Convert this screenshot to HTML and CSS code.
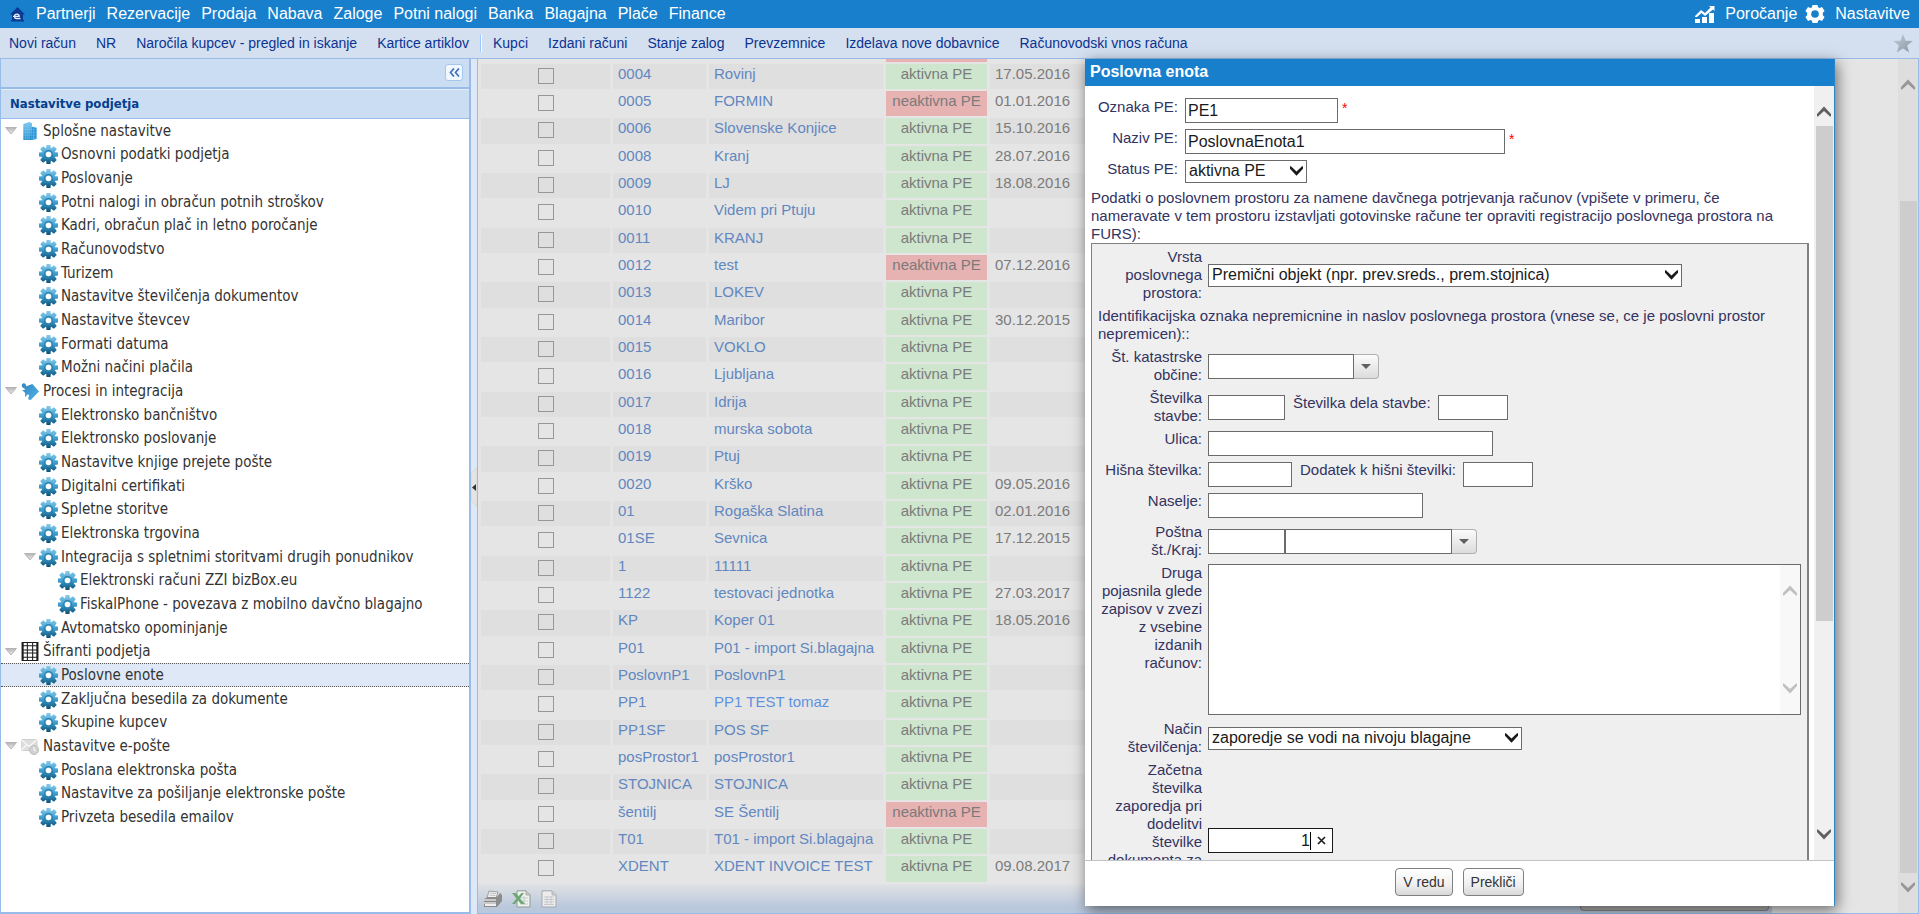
FILE: index.html
```html
<!DOCTYPE html>
<html lang="sl">
<head>
<meta charset="utf-8">
<title>Poslovne enote</title>
<link rel="stylesheet" href="styles.css">
</head>
<body>
<svg class="defs" aria-hidden="true">
  <defs>
    <linearGradient id="blue" gradientUnits="userSpaceOnUse" x1="0" y1="0" x2="0" y2="20"><stop offset="0" stop-color="#8ccbe8"/><stop offset=".5" stop-color="#3d9fd0"/><stop offset="1" stop-color="#0d4f74"/></linearGradient>
    <linearGradient id="sky" x1="0" y1="0" x2="1" y2="1"><stop offset="0" stop-color="#2f86bd"/><stop offset="1" stop-color="#55b4ee"/></linearGradient>
    <linearGradient id="tower" x1="0" y1="0" x2="0" y2="1"><stop offset="0" stop-color="#7cc8f0"/><stop offset="1" stop-color="#1d86cb"/></linearGradient>
    <linearGradient id="silver" x1="0" y1="0" x2="0" y2="1"><stop offset="0" stop-color="#b5b5b5"/><stop offset="1" stop-color="#ececec"/></linearGradient>
    <linearGradient id="starfill" x1="0" y1="0" x2="1" y2="1"><stop offset="0" stop-color="#c3cdd6"/><stop offset="1" stop-color="#8897a5"/></linearGradient>
    <symbol id="cog" viewBox="0 0 20 20">
      <g fill="url(#blue)"><circle cx="10" cy="10" r="6.900"/>
      <path d="M7.900 0h4.200l.6 5H7.300zM7.900 20h4.200l.6-5H7.300zM0 7.900v4.200l5 .6V7.300zM20 7.900v4.200l-5 .6V7.300zM1.300 4.300 4.300 1.300l4 3-4 4zM18.700 4.300 15.700 1.300l-4 3 4 4zM1.300 15.700l3 3 4-3-4-4zM18.700 15.700l-3 3-4-3 4-4z"/></g>
      <circle cx="10" cy="10" r="4.100" fill="none" stroke="#2a7fae" stroke-width="1.200"/>
      <circle cx="10" cy="10" r="2.900" fill="#fff"/>
    </symbol>
    <symbol id="towers" viewBox="0 0 18 20"><path d="M2 2 8 0l3 1v18H2z" fill="url(#tower)"/><path d="M11 5l5 1v12l-5 1z" fill="#2b94d8"/><path d="M4 2v17M6 1v18M8 1v18M13 6v12" stroke="#8fd0f3" stroke-width=".5"/><path d="M2 5h14M2 8h14M2 11h14M2 14h14M2 17h14" stroke="#8fd0f3" stroke-width=".3"/></symbol>
    <symbol id="puzzle" viewBox="0 0 19 19"><path d="M1 2.500C1.500.5 4 .3 5 2c.5.900.4 1.500.5 2L12 1.500l7 8-8.500 8.700c-1.600.8-3-.3-2.900-1.800.1-1 .9-1.300.9-2.300 0-1.500-2-1.800-2.600-.4-.4 1-.9 1.500-1.700 1.300L4.400 11 1.200 8c1-.4 2.300.2 2.900-.7C4.600 6.300 3 6.400 2 5.500.9 4.700.7 3.600 1 2.500z" fill="url(#sky)"/></symbol>
    <symbol id="sheet" viewBox="0 0 16 18"><path d="M0 0h16v18H0z" fill="#1c1c1c"/><path d="M2 1h3v2H2zM6 1h4v2H6zM11 1h3v2h-3zM2 4h3v3H2zM6 4h4v3H6zM11 4h3v3h-3zM2 8h3v2H2zM6 8h4v2H6zM11 8h3v2h-3zM2 11h3v3H2zM6 11h4v3H6zM11 11h3v3h-3zM2 15h3v2H2zM6 15h4v2H6zM11 15h3v2h-3z" fill="#fff"/></symbol>
    <symbol id="mail" viewBox="0 0 18 18"><path d="M0 2h16v11H0z" fill="#dedede" stroke="#cfcfcf"/><path d="M0 2l8 7 8-7M0 13l6-6M16 13l-6-6" fill="none" stroke="#f7f7f7" stroke-width="1.300"/><circle cx="13" cy="12.500" r="4.500" fill="#d2d2d2" stroke="#bdbdbd"/><path d="M13 9.500v3l2 1" fill="none" stroke="#fff"/></symbol>
    <symbol id="twist" viewBox="0 0 12 8"><path d="M.5.5h11L6 7z" fill="url(#silver)" stroke="#a9a9a9" stroke-width=".8"/></symbol>
    <symbol id="up" viewBox="0 0 14 10"><path d="M0 7.500 7 0l7 7.500V10h-1L7 4.500 1 10H0z" fill="currentColor"/></symbol>
    <symbol id="down" viewBox="0 0 14 10"><path d="M0 2.500 7 10l7-7.500V0h-1L7 5.500 1 0H0z" fill="currentColor"/></symbol>
  </defs>
</svg>

<header class="menubar">
  <nav class="menu" aria-label="Glavni meni">
    <a class="home" href="#" aria-label="Domov"><svg width="15" height="15" viewBox="0 0 15 15"><path d="M7.500 0 15 7.500h-2V13h1v1.500H1V13h1V7.500H0z" fill="#0a3a94"/><path d="M10.500 11.500H6.500c-1.600 0-2-1-2-2.200 0-1.300.8-2.100 2.400-2.100s2.300.8 2.300 2.200H3" fill="none" stroke="#e4edf8" stroke-width="1.300"/></svg></a>
    <a href="#">Partnerji</a><a href="#">Rezervacije</a><a href="#">Prodaja</a><a href="#">Nabava</a><a href="#">Zaloge</a><a href="#">Potni nalogi</a><a href="#">Banka</a><a href="#">Blagajna</a><a href="#">Plače</a><a href="#">Finance</a>
  </nav>
  <nav class="tools" aria-label="Orodja">
    <a href="#"><svg width="20" height="18" viewBox="0 0 20 18"><path d="M0 14h5v4H0zM7 12h5v6H7zM14 8h5v10h-5zM0 11l6-6 4 3 5.500-5.500L14 1h5.500v5L18 4.500 10 11 6.500 8 2 12H0z" fill="#fff"/></svg>Poročanje</a>
    <a href="#"><svg width="20" height="18" viewBox="0 0 20 18"><path fill-rule="evenodd" d="M7.500 0h5l.6 2.200 1.500.8L17 2l2.600 4-1.800 1.800v2.400l1.800 1.800L17 16l-2.400-1-1.500.8-.6 2.200h-5l-.6-2.200L5.400 15 3 16 .4 12l1.800-1.800V7.800L.4 6 3 2l2.400 1 1.500-.8zM10 5.200a3.800 3.800 0 1 0 0 7.600 3.800 3.800 0 0 0 0-7.600z" fill="#fff"/></svg>Nastavitve</a>
  </nav>
</header>

<nav class="shortcuts" aria-label="Bližnjice">
  <a href="#">Novi račun</a><a href="#">NR</a><a href="#">Naročila kupcev - pregled in iskanje</a><a href="#">Kartice artiklov</a>
  <span class="sep"></span>
  <a href="#">Kupci</a><a href="#">Izdani računi</a><a href="#">Stanje zalog</a><a href="#">Prevzemnice</a><a href="#">Izdelava nove dobavnice</a><a href="#">Računovodski vnos računa</a>
  <button class="star" type="button" aria-label="Priljubljene"><svg width="20" height="19" viewBox="0 0 20 19"><path d="M10 0l2.600 6.800 7.200.3-5.700 4.500 2 7L10 14.600l-6.100 4 2-7L.2 7.100l7.200-.3z" fill="url(#starfill)"/></svg></button>
</nav>

<main class="work">
  <aside class="side">
    <div class="side-tools"><button class="fold" type="button" aria-label="Skrči"><svg width="11" height="9" viewBox="0 0 11 9"><path d="M5 .5 1.500 4.500 5 8.500M10 .5 6.500 4.500 10 8.500" fill="none" stroke="#3f74b5" stroke-width="1.700"/></svg></button></div>
    <h1 class="side-title">Nastavitve podjetja</h1>
    <ul class="tree">
      <li class="l0"><svg class="tw"><use href="#twist"/></svg><svg class="ic"><use href="#towers"/></svg><a href="#">Splošne nastavitve</a></li>
      <li class="l1"><svg class="ic"><use href="#cog"/></svg><a href="#">Osnovni podatki podjetja</a></li>
      <li class="l1"><svg class="ic"><use href="#cog"/></svg><a href="#">Poslovanje</a></li>
      <li class="l1"><svg class="ic"><use href="#cog"/></svg><a href="#">Potni nalogi in obračun potnih stroškov</a></li>
      <li class="l1"><svg class="ic"><use href="#cog"/></svg><a href="#">Kadri, obračun plač in letno poročanje</a></li>
      <li class="l1"><svg class="ic"><use href="#cog"/></svg><a href="#">Računovodstvo</a></li>
      <li class="l1"><svg class="ic"><use href="#cog"/></svg><a href="#">Turizem</a></li>
      <li class="l1"><svg class="ic"><use href="#cog"/></svg><a href="#">Nastavitve številčenja dokumentov</a></li>
      <li class="l1"><svg class="ic"><use href="#cog"/></svg><a href="#">Nastavitve števcev</a></li>
      <li class="l1"><svg class="ic"><use href="#cog"/></svg><a href="#">Formati datuma</a></li>
      <li class="l1"><svg class="ic"><use href="#cog"/></svg><a href="#">Možni načini plačila</a></li>
      <li class="l0"><svg class="tw"><use href="#twist"/></svg><svg class="ic"><use href="#puzzle"/></svg><a href="#">Procesi in integracija</a></li>
      <li class="l1"><svg class="ic"><use href="#cog"/></svg><a href="#">Elektronsko bančništvo</a></li>
      <li class="l1"><svg class="ic"><use href="#cog"/></svg><a href="#">Elektronsko poslovanje</a></li>
      <li class="l1"><svg class="ic"><use href="#cog"/></svg><a href="#">Nastavitve knjige prejete pošte</a></li>
      <li class="l1"><svg class="ic"><use href="#cog"/></svg><a href="#">Digitalni certifikati</a></li>
      <li class="l1"><svg class="ic"><use href="#cog"/></svg><a href="#">Spletne storitve</a></li>
      <li class="l1"><svg class="ic"><use href="#cog"/></svg><a href="#">Elektronska trgovina</a></li>
      <li class="l1 open"><svg class="tw"><use href="#twist"/></svg><svg class="ic"><use href="#cog"/></svg><a href="#">Integracija s spletnimi storitvami drugih ponudnikov</a></li>
      <li class="l2"><svg class="ic"><use href="#cog"/></svg><a href="#">Elektronski računi ZZI bizBox.eu</a></li>
      <li class="l2"><svg class="ic"><use href="#cog"/></svg><a href="#">FiskalPhone - povezava z mobilno davčno blagajno</a></li>
      <li class="l1"><svg class="ic"><use href="#cog"/></svg><a href="#">Avtomatsko opominjanje</a></li>
      <li class="l0"><svg class="tw"><use href="#twist"/></svg><svg class="ic"><use href="#sheet"/></svg><a href="#">Šifranti podjetja</a></li>
      <li class="l1 selected"><svg class="ic"><use href="#cog"/></svg><a href="#">Poslovne enote</a></li>
      <li class="l1"><svg class="ic"><use href="#cog"/></svg><a href="#">Zaključna besedila za dokumente</a></li>
      <li class="l1"><svg class="ic"><use href="#cog"/></svg><a href="#">Skupine kupcev</a></li>
      <li class="l0"><svg class="tw"><use href="#twist"/></svg><svg class="ic"><use href="#mail"/></svg><a href="#">Nastavitve e-pošte</a></li>
      <li class="l1"><svg class="ic"><use href="#cog"/></svg><a href="#">Poslana elektronska pošta</a></li>
      <li class="l1"><svg class="ic"><use href="#cog"/></svg><a href="#">Nastavitve za pošiljanje elektronske pošte</a></li>
      <li class="l1"><svg class="ic"><use href="#cog"/></svg><a href="#">Privzeta besedila emailov</a></li>
    </ul>
  </aside>

  <button class="split" type="button" aria-label="Skrči levo ploščo"><svg width="6" height="40" viewBox="0 0 6 40"><path d="M6 0v40L0 33V7z" fill="#e4e4e4" stroke="#cfcfcf" stroke-width=".6"/><path d="M5 17v7L1 20.500z" fill="#333"/></svg></button>

  <section class="content">
    <div class="rows">
      <table class="units">
        <tbody>
          <tr><td></td><td></td><td></td><td class="off"></td><td></td></tr>
          <tr><td><input type="checkbox" aria-label="0004"></td><td><a href="#">0004</a></td><td><a href="#">Rovinj</a></td><td class="on">aktivna PE</td><td>17.05.2016</td></tr>
          <tr><td><input type="checkbox" aria-label="0005"></td><td><a href="#">0005</a></td><td><a href="#">FORMIN</a></td><td class="off">neaktivna PE</td><td>01.01.2016</td></tr>
          <tr><td><input type="checkbox" aria-label="0006"></td><td><a href="#">0006</a></td><td><a href="#">Slovenske Konjice</a></td><td class="on">aktivna PE</td><td>15.10.2016</td></tr>
          <tr><td><input type="checkbox" aria-label="0008"></td><td><a href="#">0008</a></td><td><a href="#">Kranj</a></td><td class="on">aktivna PE</td><td>28.07.2016</td></tr>
          <tr><td><input type="checkbox" aria-label="0009"></td><td><a href="#">0009</a></td><td><a href="#">LJ</a></td><td class="on">aktivna PE</td><td>18.08.2016</td></tr>
          <tr><td><input type="checkbox" aria-label="0010"></td><td><a href="#">0010</a></td><td><a href="#">Videm pri Ptuju</a></td><td class="on">aktivna PE</td><td></td></tr>
          <tr><td><input type="checkbox" aria-label="0011"></td><td><a href="#">0011</a></td><td><a href="#">KRANJ</a></td><td class="on">aktivna PE</td><td></td></tr>
          <tr><td><input type="checkbox" aria-label="0012"></td><td><a href="#">0012</a></td><td><a href="#">test</a></td><td class="off">neaktivna PE</td><td>07.12.2016</td></tr>
          <tr><td><input type="checkbox" aria-label="0013"></td><td><a href="#">0013</a></td><td><a href="#">LOKEV</a></td><td class="on">aktivna PE</td><td></td></tr>
          <tr><td><input type="checkbox" aria-label="0014"></td><td><a href="#">0014</a></td><td><a href="#">Maribor</a></td><td class="on">aktivna PE</td><td>30.12.2015</td></tr>
          <tr><td><input type="checkbox" aria-label="0015"></td><td><a href="#">0015</a></td><td><a href="#">VOKLO</a></td><td class="on">aktivna PE</td><td></td></tr>
          <tr><td><input type="checkbox" aria-label="0016"></td><td><a href="#">0016</a></td><td><a href="#">Ljubljana</a></td><td class="on">aktivna PE</td><td></td></tr>
          <tr><td><input type="checkbox" aria-label="0017"></td><td><a href="#">0017</a></td><td><a href="#">Idrija</a></td><td class="on">aktivna PE</td><td></td></tr>
          <tr><td><input type="checkbox" aria-label="0018"></td><td><a href="#">0018</a></td><td><a href="#">murska sobota</a></td><td class="on">aktivna PE</td><td></td></tr>
          <tr><td><input type="checkbox" aria-label="0019"></td><td><a href="#">0019</a></td><td><a href="#">Ptuj</a></td><td class="on">aktivna PE</td><td></td></tr>
          <tr><td><input type="checkbox" aria-label="0020"></td><td><a href="#">0020</a></td><td><a href="#">Krško</a></td><td class="on">aktivna PE</td><td>09.05.2016</td></tr>
          <tr><td><input type="checkbox" aria-label="01"></td><td><a href="#">01</a></td><td><a href="#">Rogaška Slatina</a></td><td class="on">aktivna PE</td><td>02.01.2016</td></tr>
          <tr><td><input type="checkbox" aria-label="01SE"></td><td><a href="#">01SE</a></td><td><a href="#">Sevnica</a></td><td class="on">aktivna PE</td><td>17.12.2015</td></tr>
          <tr><td><input type="checkbox" aria-label="1"></td><td><a href="#">1</a></td><td><a href="#">11111</a></td><td class="on">aktivna PE</td><td></td></tr>
          <tr><td><input type="checkbox" aria-label="1122"></td><td><a href="#">1122</a></td><td><a href="#">testovaci jednotka</a></td><td class="on">aktivna PE</td><td>27.03.2017</td></tr>
          <tr><td><input type="checkbox" aria-label="KP"></td><td><a href="#">KP</a></td><td><a href="#">Koper 01</a></td><td class="on">aktivna PE</td><td>18.05.2016</td></tr>
          <tr><td><input type="checkbox" aria-label="P01"></td><td><a href="#">P01</a></td><td><a href="#">P01 - import Si.blagajna</a></td><td class="on">aktivna PE</td><td></td></tr>
          <tr><td><input type="checkbox" aria-label="PoslovnP1"></td><td><a href="#">PoslovnP1</a></td><td><a href="#">PoslovnP1</a></td><td class="on">aktivna PE</td><td></td></tr>
          <tr><td><input type="checkbox" aria-label="PP1"></td><td><a href="#">PP1</a></td><td><a class="hot" href="#">PP1 TEST tomaz</a></td><td class="on">aktivna PE</td><td></td></tr>
          <tr><td><input type="checkbox" aria-label="PP1SF"></td><td><a href="#">PP1SF</a></td><td><a href="#">POS SF</a></td><td class="on">aktivna PE</td><td></td></tr>
          <tr><td><input type="checkbox" aria-label="posProstor1"></td><td><a href="#">posProstor1</a></td><td><a href="#">posProstor1</a></td><td class="on">aktivna PE</td><td></td></tr>
          <tr><td><input type="checkbox" aria-label="STOJNICA"></td><td><a href="#">STOJNICA</a></td><td><a href="#">STOJNICA</a></td><td class="on">aktivna PE</td><td></td></tr>
          <tr><td><input type="checkbox" aria-label="šentilj"></td><td><a href="#">šentilj</a></td><td><a href="#">SE Šentilj</a></td><td class="off">neaktivna PE</td><td></td></tr>
          <tr><td><input type="checkbox" aria-label="T01"></td><td><a href="#">T01</a></td><td><a href="#">T01 - import Si.blagajna</a></td><td class="on">aktivna PE</td><td></td></tr>
          <tr><td><input type="checkbox" aria-label="XDENT"></td><td><a href="#">XDENT</a></td><td><a href="#">XDENT INVOICE TEST</a></td><td class="on">aktivna PE</td><td>09.08.2017</td></tr>
        </tbody>
      </table>
    </div>
    <div class="actions">
      <button type="button" aria-label="Natisni"><svg width="19" height="18" viewBox="0 0 19 18"><path d="M6 1l9 1-2 6H4z" fill="#f1f1f1" stroke="#8d8d8d" stroke-width=".8"/><path d="M7 3l6 .6M6.500 5l6 .6" stroke="#aaa" stroke-width=".7"/><path d="M1 9l4-2h9l3-4 2 2v6l-5 6H1z" fill="#8c8c8c"/><path d="M1 9h12v5H1z" fill="#c9c9c9"/><path d="M2 14h11v2H2z" fill="#efefef"/><path d="M1 11.500h12" stroke="#777" stroke-width=".8"/></svg></button>
      <button type="button" aria-label="Excel"><svg width="19" height="18" viewBox="0 0 19 18"><path d="M5 .8h9l4 4V17H5z" fill="#eef1ee" stroke="#909a90"/><path d="M14 1v4h4" fill="#ccc" stroke="#909a90" stroke-width=".7"/><path d="M8 8h8M8 11h8M8 14h8M12 6v9" stroke="#bbc4bb" stroke-width=".8"/><path d="M0 3h4l2.500 3.200L9.500 3H12L8 8.500l5 5.500H9l-3-3.500L3 14H0l4.500-5.500z" fill="#6fa876"/></svg></button>
      <button type="button" aria-label="Izvoz"><svg width="19" height="18" viewBox="0 0 19 18"><path d="M1 .8h10l4 4V17H1z" fill="#ececec" stroke="#a3a8ad"/><path d="M11 1v4h4" fill="#d2d2d2" stroke="#a3a8ad" stroke-width=".7"/><path d="M3 7h10M3 9.500h10M3 12h10M3 14.500h10M6 6v9M10 6v9" stroke="#bfc3c7" stroke-width=".8"/></svg></button>
      <span class="ghost"></span>
    </div>
    <div class="bar bar-main" aria-hidden="true"><svg><use href="#up"/></svg><span></span><svg><use href="#down"/></svg></div>
  </section>

  <form class="dialog" role="dialog" aria-labelledby="dlg">
    <h2 id="dlg">Poslovna enota</h2>
    <div class="dialog-body">
      <div class="form">
        <div class="field top"><label for="oznaka">Oznaka PE:</label><div class="ctl"><input id="oznaka" class="w153" type="text" value="PE1"><span class="req">*</span></div></div>
        <div class="field top"><label for="naziv">Naziv PE:</label><div class="ctl"><input id="naziv" class="w320" type="text" value="PoslovnaEnota1"><span class="req">*</span></div></div>
        <div class="field top"><label for="status">Status PE:</label><div class="ctl"><span class="sel w122"><select id="status"><option>aktivna PE</option></select><svg><use href="#down"/></svg></span></div></div>
        <p>Podatki o poslovnem prostoru za namene davčnega potrjevanja računov (vpišete v primeru, če nameravate v tem prostoru izstavljati gotovinske račune ter opraviti registracijo poslovnega prostora na FURS):</p>
        <div class="box">
          <div class="field"><label for="vrsta">Vrsta poslovnega prostora:</label><div class="ctl"><span class="sel w474"><select id="vrsta"><option>Premični objekt (npr. prev.sreds., prem.stojnica)</option></select><svg><use href="#down"/></svg></span></div></div>
          <p>Identifikacijska oznaka nepremicnine in naslov poslovnega prostora (vnese se, ce je poslovni prostor nepremicen)::</p>
          <div class="field"><label for="kat">Št. katastrske občine:</label><div class="ctl"><input id="kat" class="w146" type="text"><button class="trig" type="button" aria-label="Izberi občino"></button></div></div>
          <div class="field"><label for="stavba">Številka stavbe:</label><div class="ctl"><input id="stavba" class="w77" type="text"><label class="mid" for="del">Številka dela stavbe:</label><input id="del" class="w70" type="text"></div></div>
          <div class="field"><label for="ulica">Ulica:</label><div class="ctl"><input id="ulica" class="w285" type="text"></div></div>
          <div class="field"><label for="hisna">Hišna številka:</label><div class="ctl"><input id="hisna" class="w84" type="text"><label class="mid" for="dodatek">Dodatek k hišni številki:</label><input id="dodatek" class="w70" type="text"></div></div>
          <div class="field"><label for="naselje">Naselje:</label><div class="ctl"><input id="naselje" class="w215" type="text"></div></div>
          <div class="field"><label for="posta">Poštna<br>št./Kraj:</label><div class="ctl"><input id="posta" class="w77" type="text"><input class="w167" type="text" aria-label="Kraj"><button class="trig" type="button" aria-label="Izberi kraj"></button></div></div>
          <div class="field"><label for="druga">Druga pojasnila glede zapisov v zvezi z vsebine izdanih računov:</label><div class="ctl area"><textarea id="druga"></textarea><div class="bar bar-area" aria-hidden="true"><svg><use href="#up"/></svg><svg><use href="#down"/></svg></div></div></div>
          <div class="field"><label for="nacin">Način številčenja:</label><div class="ctl"><span class="sel w314"><select id="nacin"><option>zaporedje se vodi na nivoju blagajne</option></select><svg><use href="#down"/></svg></span></div></div>
          <div class="field tall"><label for="zac">Začetna številka zaporedja pri dodelitvi številke dokumenta za</label><div class="ctl"><span class="num"><input id="zac" type="text" value="1"><i></i><button type="button" aria-label="Počisti"><svg width="9" height="9" viewBox="0 0 9 9"><path d="M1 1l7 7M8 1 1 8" stroke="#222" stroke-width="1.700"/></svg></button></span></div></div>
        </div>
      </div>
      <div class="bar bar-dlg" aria-hidden="true"><svg><use href="#up"/></svg><span></span><svg><use href="#down"/></svg></div>
    </div>
    <div class="buttons"><button type="button">V redu</button><button type="button">Prekliči</button></div>
  </form>
</main>
</body>
</html>
```
FILE: styles.css
```css
* { box-sizing: border-box; }
body {
  margin: 0;
  height: 100vh;
  display: flex;
  flex-direction: column;
  overflow: hidden;
  font-family: "Liberation Sans", Arial, sans-serif;
  font-size: 15px;
  line-height: 18px;
}
a { color: inherit; text-decoration: none; }
button, input, select, textarea { font: inherit; color: inherit; margin: 0; border-radius: 0; }
button { padding: 0; border: 0; background: none; }
svg { display: block; flex: none; }
.defs { position: absolute; width: 0; height: 0; }

/* top bars */
.menubar { flex: none; height: 28px; display: flex; justify-content: space-between; align-items: center; padding: 0 9px 0 10px; background: #177fcc; color: #fff; font-size: 16px; }
.menu { display: flex; align-items: center; gap: 11px; }
.tools { display: flex; align-items: center; gap: 8px; }
.tools a { display: flex; align-items: center; gap: 10px; }
.shortcuts { flex: none; height: 31px; display: flex; align-items: center; gap: 20px; padding: 0 6px 0 9px; background: #d4e0f0; border-bottom: 1px solid #99bbe8; color: #0b3391; font-size: 14px; }
.sep { width: 2px; height: 17px; margin: 0 -9px; border-left: 1px solid #98c8ff; border-right: 1px solid #fff; }
.star { margin-left: auto; }

.work { flex: 1; min-height: 0; display: flex; position: relative; background: #dfe8f6; }

/* left panel */
.side { width: 471px; flex: none; display: flex; flex-direction: column; background: #fff; border: solid #99bbe8; border-width: 0 2px 2px 1px; }
.side-tools { height: 30px; flex: none; display: flex; align-items: center; justify-content: flex-end; padding: 0 6px 2px; background: #cbddf3; border-bottom: 2px solid #99bbe8; }
.fold { width: 18px; height: 17px; display: grid; place-items: center; background: #f1f7fe; border: 1px solid #a5c6ef; border-radius: 3px; }
.side-title { flex: none; margin: 0; height: 30px; padding-left: 9px; background: #cbddf3; border-top: 1px solid #e4eefa; border-bottom: 1px solid #99bbe8; color: #04408c; font: bold 13px/28px "DejaVu Sans Condensed", "Noto Sans", sans-serif; }
.tree { margin: 0; padding: 0; list-style: none; font: 15px/23px "DejaVu Sans Condensed", "Noto Sans", sans-serif; color: #333; }
.tree li { height: 24px; display: flex; align-items: center; gap: 3px; padding-left: 38px; }
.tree li:nth-child(3n+2) { height: 23px; }
.tree li.l0 { padding-left: 4px; gap: 4px; }
.tree li.l2 { padding-left: 57px; }
.tree li.open { padding-left: 23px; }
.tree .ic { width: 19px; height: 19px; }
.tree .l0 .ic { width: 18px; }
.tree .tw { width: 12px; height: 8px; }
.tree li.selected { background: #dfe8f6; border: dotted #555; border-width: 1px 0; }
.split { width: 6px; flex: none; display: grid; place-items: center; }

/* units list */
.content { flex: 1; min-width: 0; display: grid; grid-template-columns: 1fr 20px; grid-template-rows: 1fr 29px; background: #e5e5e5; border: solid #99bbe8; border-width: 0 1px 1px; }
.rows { min-height: 0; overflow: hidden; display: flex; flex-direction: column; justify-content: flex-end; }
.units { width: 80%; flex: none; table-layout: fixed; border-collapse: separate; border-spacing: 3px 2px; color: #7b7b7b; }
.units td { height: 25px; padding: 1px 5px 0; vertical-align: top; white-space: nowrap; }
.units tr:nth-child(3n+1) td { height: 26px; }
.units tr:nth-child(2n) td { background: #dfdfdf; }
.units td:nth-child(1) { width: 129px; text-align: center; padding-top: 4px; line-height: 0; }
.units td:nth-child(2) { width: 93px; }
.units td:nth-child(3) { width: 174px; }
.units td:nth-child(4) { width: 101px; padding: 1px 0 0; text-align: center; }
.units tr td.on { background: #cde6cd; }
.units tr td.off { background: #e6b2b2; }
.units a { color: #6287c0; }
.units a.hot { color: #5e92e0; }
.units input { appearance: none; width: 16px; height: 16px; border: 1px solid #979797; }
.actions { grid-row: 2; grid-column: 1; display: flex; align-items: center; gap: 10px; padding-left: 5px; margin-right: 126px; background: linear-gradient(#e0e2e5, #bac8dc 80%); }
.ghost { align-self: flex-start; width: 189px; height: 27px; margin-left: auto; margin-right: 3px; border: 1px solid #888; border-top: 0; border-radius: 0 0 4px 4px; background: #b3b3b3; }

/* drawn scroll bars */
.bar { display: flex; flex-direction: column; align-items: center; }
.bar svg { width: 14px; height: 11px; }
.bar span { width: 17px; background: #cdcdcd; }
.bar-main { grid-column: 2; grid-row: 1 / 3; padding: 20px 0; background: #dedede; color: #979797; }
.bar-main span { flex: 1; margin: 111px 0 9px; }
.bar-dlg { width: 20px; flex: none; padding: 20px 0; background: #f0f0f0; color: #606060; }
.bar-dlg span { flex: 1; margin: 9px 0 208px; }
.bar-area { width: 20px; padding: 20px 0; justify-content: space-between; background: #f8f8f8; color: #c0c0c0; }

/* dialog window */
.dialog { position: absolute; top: 0; right: 84px; bottom: 8px; width: 750px; display: flex; flex-direction: column; background: #fff; border-right: 1px solid #2b86c8; box-shadow: 2px 4px 14px rgba(0, 0, 0, .55); color: #33335f; }
.dialog h2 { flex: none; margin: 0; height: 27px; padding-left: 5px; background: #177fcc; color: #fff; font-size: 16px; line-height: 25px; }
.dialog-body { flex: 1; min-height: 0; display: flex; overflow: hidden; }
.form { flex: 1; min-width: 0; padding: 12px 5px 0 6px; }
.form p { margin: 0; padding-right: 20px; }
.field { display: grid; grid-template-columns: 104px 1fr; column-gap: 6px; min-height: 26px; margin-bottom: 5px; }
.field > label { text-align: right; }
.field.top { grid-template-columns: 87px 1fr; column-gap: 7px; min-height: 0; margin-bottom: 6px; }
.ctl { display: flex; align-items: center; }
.ctl input { height: 25px; padding: 0 2px; border: 1px solid #6b6b6b; background: #fff; color: #1a1a1a; font-size: 16px; }
.req { color: #f00; margin-left: 4px; align-self: flex-start; font-size: 14px; line-height: 20px; }
.mid { margin: 0 7px 0 8px; padding-bottom: 8px; }
.sel { position: relative; height: 23px; display: flex; }
.sel select { width: 100%; appearance: none; padding: 0 4px 1px 3px; border: 1px solid #6b6b6b; background: #fff; color: #1a1a1a; font-size: 16px; }
.sel svg { position: absolute; right: 4px; top: 6px; width: 13px; height: 10px; color: #1a1a1a; }
.box { padding: 4px 6px 0; background: #efefef; border: solid #808080; border-width: 1px 2px 0 1px; }
.box p { margin-bottom: 5px; padding-right: 0; }
.w70 { width: 70px; }
.w77 { width: 77px; }
.w84 { width: 84px; }
.w122 { width: 122px; }
.w146 { width: 146px; }
.w153 { width: 153px; }
.w167 { width: 167px; }
.w215 { width: 215px; }
.w285 { width: 285px; }
.w314 { width: 314px; }
.w320 { width: 320px; }
.w474 { width: 474px; }
.trig { width: 25px; height: 25px; display: grid; place-items: center; border: 1px solid #b0b0b0; border-left: 0; border-radius: 0 4px 4px 0; background: linear-gradient(#fbfbfb, #dcdcdc); }
.trig::after { content: ""; border: 5px solid transparent; border-top-color: #606060; border-bottom: 0; }
.area { height: 151px; align-items: stretch; background: #fff; border: 1px solid #6b6b6b; }
.area textarea { flex: 1; min-width: 0; border: 0; resize: none; background: #fff; }
.tall { min-height: 159px; }
.num { width: 125px; height: 25px; display: flex; align-items: center; padding-right: 6px; background: #fff; border: 1px solid #1a1a1a; }
.num input { flex: 1; min-width: 0; height: 23px; border: 0; text-align: right; padding: 0; }
.num i { width: 1px; height: 18px; margin-right: 6px; background: #000; }
.buttons { position: relative; flex: none; height: 46px; display: flex; justify-content: center; align-items: flex-start; gap: 10px; padding-top: 7px; background: #fff; border-top: 1px solid #c0c4c8; }
.buttons button { height: 28px; padding: 0 7px; border: 1px solid #808080; border-radius: 4px; background: linear-gradient(#fff, #f0f0f0 60%, #d8d8d8); color: #333; font-size: 14px; }
```
